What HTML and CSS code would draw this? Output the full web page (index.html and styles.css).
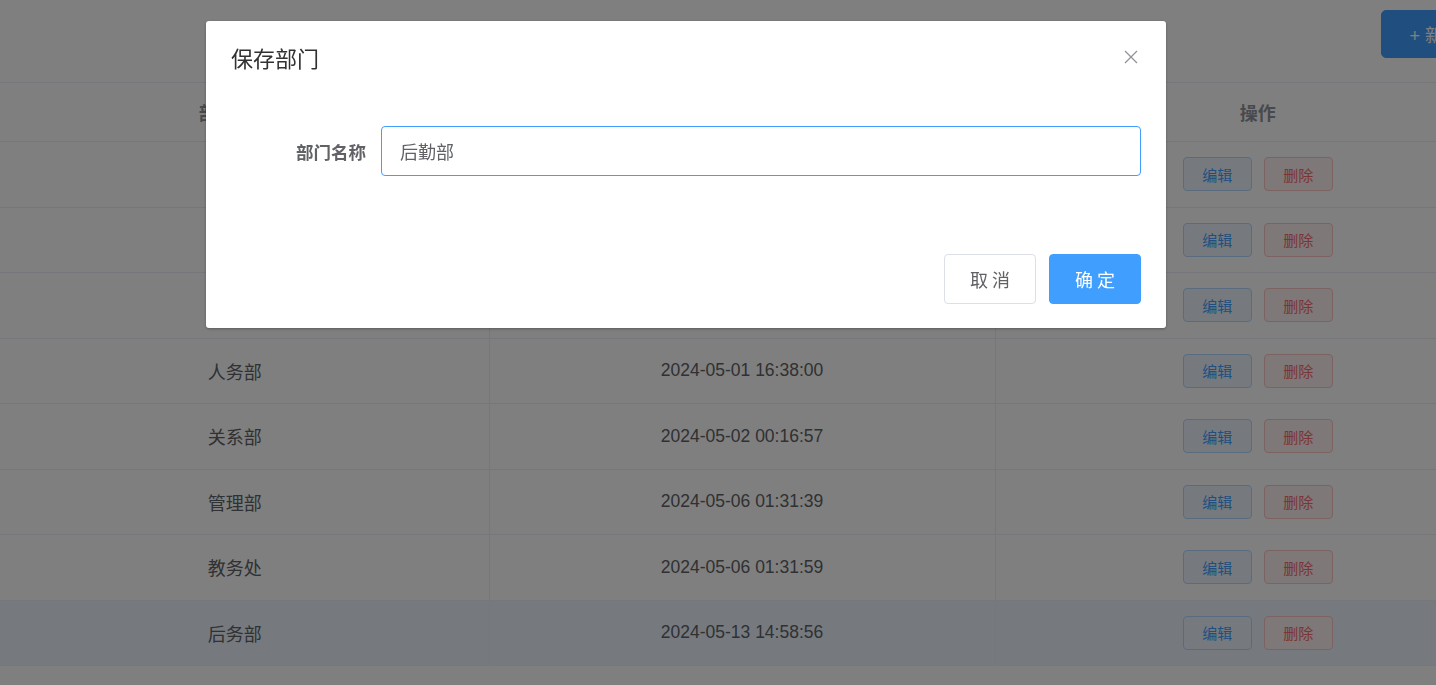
FILE: index.html
```html
<!DOCTYPE html>
<html>
<head>
  <title>部门管理</title>
  <link rel="stylesheet" href="styles.css">
</head>
<body>
  <div class="page">
    <div class="toolbar">
      <button class="btn btn-primary add-button">+ 新增</button>
    </div>

    <table class="dept-table">
      <colgroup>
        <col class="col-name">
        <col class="col-time">
        <col class="col-ops">
      </colgroup>
      <thead>
        <tr>
          <th>部门名称</th>
          <th>最后操作时间</th>
          <th>操作</th>
        </tr>
      </thead>
      <tbody>
        <tr>
          <td>学工部</td>
          <td class="time">2024-04-28 10:12:30</td>
          <td><button class="btn-small edit">编辑</button><button class="btn-small delete">删除</button></td>
        </tr>
        <tr>
          <td>教研部</td>
          <td class="time">2024-04-29 09:20:11</td>
          <td><button class="btn-small edit">编辑</button><button class="btn-small delete">删除</button></td>
        </tr>
        <tr>
          <td>就业部</td>
          <td class="time">2024-04-30 14:05:42</td>
          <td><button class="btn-small edit">编辑</button><button class="btn-small delete">删除</button></td>
        </tr>
        <tr>
          <td>人务部</td>
          <td class="time">2024-05-01 16:38:00</td>
          <td><button class="btn-small edit">编辑</button><button class="btn-small delete">删除</button></td>
        </tr>
        <tr>
          <td>关系部</td>
          <td class="time">2024-05-02 00:16:57</td>
          <td><button class="btn-small edit">编辑</button><button class="btn-small delete">删除</button></td>
        </tr>
        <tr>
          <td>管理部</td>
          <td class="time">2024-05-06 01:31:39</td>
          <td><button class="btn-small edit">编辑</button><button class="btn-small delete">删除</button></td>
        </tr>
        <tr>
          <td>教务处</td>
          <td class="time">2024-05-06 01:31:59</td>
          <td><button class="btn-small edit">编辑</button><button class="btn-small delete">删除</button></td>
        </tr>
        <tr class="current-row">
          <td>后务部</td>
          <td class="time">2024-05-13 14:58:56</td>
          <td><button class="btn-small edit">编辑</button><button class="btn-small delete">删除</button></td>
        </tr>
      </tbody>
    </table>
  </div>

  <div class="overlay">
    <div class="dialog">
      <div class="dialog-header">
        <span class="dialog-title">保存部门</span>
        <button class="dialog-close">
          <svg width="14" height="14" viewBox="0 0 14 14">
            <path d="M1 1 L13 13 M13 1 L1 13" stroke="#909399" stroke-width="1.3" fill="none"/>
          </svg>
        </button>
      </div>
      <div class="dialog-body">
        <div class="form-item">
          <label class="form-label" for="deptName">部门名称</label>
          <input id="deptName" class="form-input" type="text" value="后勤部">
        </div>
      </div>
      <div class="dialog-footer">
        <button class="btn btn-default">取消</button>
        <button class="btn btn-primary">确定</button>
      </div>
    </div>
  </div>
</body>
</html>
```

FILE: styles.css
```css
body {
  margin: 0;
  overflow: hidden;
  background: #fff;
  font-family: "Liberation Sans", "Noto Sans CJK SC", sans-serif;
  color: #606266;
}

.page {
  width: 1540px;
  margin-left: -19px;
}

.toolbar {
  display: flex;
  justify-content: flex-end;
  align-items: flex-start;
  padding: 10px 32px 0 0;
  height: 82px;
  box-sizing: border-box;
}

.btn {
  font-family: "Liberation Sans", "Noto Sans CJK SC", sans-serif;
  font-size: 18px;
  border-radius: 4px;
  cursor: pointer;
  border: 1px solid #dcdfe6;
  background: #fff;
  color: #606266;
}

.btn-primary {
  background: #409eff;
  border-color: #409eff;
  color: #fff;
}

.add-button {
  height: 48px;
  padding: 0 27px;
  border-radius: 5px;
}

/* table */
.dept-table {
  width: 100%;
  border-collapse: collapse;
  table-layout: fixed;
  border-top: 1px solid #ebeef5;
}

.col-name { width: 508px; }
.col-time { width: 506px; }

.dept-table th,
.dept-table td {
  text-align: center;
  border-bottom: 1px solid #ebeef5;
  border-right: 1px solid #ebeef5;
  padding: 0;
}

.dept-table th {
  height: 58px;
  font-size: 18px;
  font-weight: bold;
  color: #909399;
}

.dept-table td {
  height: 64.5px;
  font-size: 18px;
  color: #606266;
}

.dept-table td.time {
  font-size: 17.5px;
}

.current-row td {
  background: #ecf5ff;
}

.btn-small {
  width: 69px;
  height: 34px;
  padding: 0;
  margin: 0 6px;
  font-family: "Liberation Sans", "Noto Sans CJK SC", sans-serif;
  font-size: 15px;
  border-radius: 4px;
  border: 1px solid;
  vertical-align: middle;
  cursor: pointer;
}

.edit {
  background: #ecf5ff;
  border-color: #b3d8ff;
  color: #409eff;
}

.delete {
  background: #fef0f0;
  border-color: #fbc4c4;
  color: #f56c6c;
}

/* dialog */
.overlay {
  position: fixed;
  top: 0;
  left: 0;
  right: 0;
  bottom: 0;
  background: rgba(0, 0, 0, 0.5);
}

.dialog {
  width: 960px;
  margin: 21px 0 0 206px;
  background: #fff;
  border-radius: 3px;
  box-shadow: 0 1px 3px rgba(0, 0, 0, 0.3);
}

.dialog-header {
  display: flex;
  justify-content: space-between;
  align-items: center;
  padding: 24px 28px 0 25px;
}

.dialog-title {
  font-size: 22px;
  line-height: 30px;
  color: #303133;
}

.dialog-close {
  border: none;
  background: none;
  padding: 0;
  width: 14px;
  height: 14px;
  margin-top: -6px;
  cursor: pointer;
}

.dialog-body {
  padding: 51px 25px 0 25px;
}

.form-item {
  display: flex;
  align-items: center;
}

.form-label {
  width: 150px;
  box-sizing: border-box;
  padding-right: 15px;
  text-align: right;
  font-size: 17.5px;
  font-weight: bold;
  color: #606266;
}

.form-input {
  flex: 1;
  height: 50px;
  box-sizing: border-box;
  padding: 0 18px;
  border: 1px solid #409eff;
  border-radius: 4px;
  outline: none;
  font-family: "Liberation Sans", "Noto Sans CJK SC", sans-serif;
  font-size: 18px;
  color: #606266;
}

.dialog-footer {
  display: flex;
  justify-content: flex-end;
  gap: 13px;
  padding: 78px 25px 24px 25px;
}

.dialog-footer .btn {
  width: 92px;
  height: 50px;
  padding: 0 0 0 4px;
  letter-spacing: 4px;
}
```
